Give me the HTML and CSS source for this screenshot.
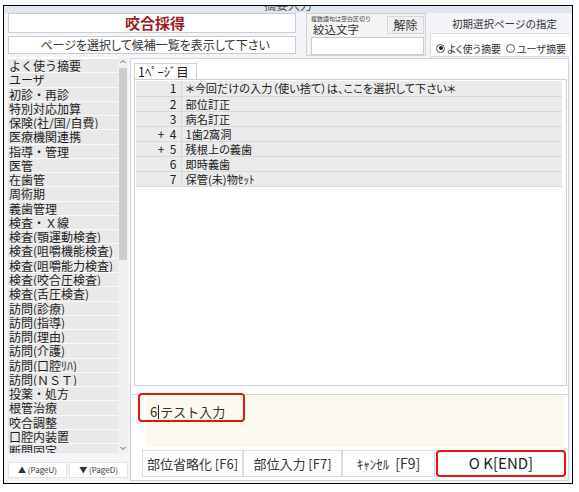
FILE: index.html
```html
<!DOCTYPE html>
<html lang="ja">
<head>
<meta charset="utf-8">
<title>摘要入力</title>
<link rel="stylesheet" href="styles.css">
</head>
<body>
<div class="window">
  <div class="titlebar"><span class="caption">摘要入力</span></div>
  <div class="client">
    <div class="top">
      <div class="heading">
        <div class="title-box">咬合採得</div>
        <div class="hint-box">ページを選択して候補一覧を表示して下さい</div>
      </div>
      <div class="filter">
        <div class="filter-head">
          <div class="filter-labels">
            <div class="tiny">複数語句は空白区切り</div>
            <div class="filter-label">絞込文字</div>
          </div>
          <div class="clear">解除</div>
        </div>
        <div class="filter-input"></div>
      </div>
      <div class="initial">
        <div class="initial-label">初期選択ページの指定</div>
        <div class="radios">
          <span class="radio on"></span><span class="radio-text">よく使う摘要</span>
          <span class="radio"></span><span class="radio-text">ユーザ摘要</span>
        </div>
      </div>
    </div>
    <div class="main">
      <div class="side">
        <div class="list">
          <ul class="items">
            <li>よく使う摘要</li>
            <li>ユーザ</li>
            <li>初診・再診</li>
            <li>特別対応加算</li>
            <li>保険(社/国/自費)</li>
            <li>医療機関連携</li>
            <li>指導・管理</li>
            <li>医管</li>
            <li>在歯管</li>
            <li>周術期</li>
            <li>義歯管理</li>
            <li>検査・Ｘ線</li>
            <li>検査(顎運動検査)</li>
            <li>検査(咀嚼機能検査)</li>
            <li>検査(咀嚼能力検査)</li>
            <li>検査(咬合圧検査)</li>
            <li>検査(舌圧検査)</li>
            <li>訪問(診療)</li>
            <li>訪問(指導)</li>
            <li>訪問(理由)</li>
            <li>訪問(介護)</li>
            <li>訪問(口腔ﾘﾊ)</li>
            <li>訪問(ＮＳＴ)</li>
            <li>投薬・処方</li>
            <li>根管治療</li>
            <li>咬合調整</li>
            <li>口腔内装置</li>
            <li>断間固定</li>
          </ul>
          <div class="vscroll">
            <svg class="arrow" width="10" height="10" viewBox="0 0 10 10"><path d="M2.5 6 L5 3.5 L7.5 6" fill="none" stroke="#606060" stroke-width="1"/></svg>
            <div class="track"><div class="thumb"></div></div>
            <svg class="arrow" width="10" height="10" viewBox="0 0 10 10"><path d="M2.5 4 L5 6.5 L7.5 4" fill="none" stroke="#606060" stroke-width="1"/></svg>
          </div>
        </div>
        <div class="pager">
          <div class="page-btn">▲ (PageU)</div>
          <div class="page-btn">▼ (PageD)</div>
        </div>
      </div>
      <div class="panel">
        <div class="tabs"><div class="tab">1ﾍﾟｰｼﾞ目</div></div>
        <div class="tab-body">
          <table class="rows">
            <tr><td class="num">1</td><td class="txt">＊今回だけの入力（使い捨て）は、ここを選択して下さい＊</td></tr>
            <tr><td class="num">2</td><td class="txt">部位訂正</td></tr>
            <tr><td class="num">3</td><td class="txt">病名訂正</td></tr>
            <tr><td class="num">+&nbsp;&nbsp;4</td><td class="txt">1歯2窩洞</td></tr>
            <tr><td class="num">+&nbsp;&nbsp;5</td><td class="txt">残根上の義歯</td></tr>
            <tr><td class="num">6</td><td class="txt">即時義歯</td></tr>
            <tr><td class="num">7</td><td class="txt">保管(未)物ｾｯﾄ</td></tr>
          </table>
        </div>
        <div class="entry">
          <div class="entry-field"><span class="entry-text">6<span class="caret"></span>テスト入力</span></div>
          <div class="mark entry-mark"></div>
        </div>
        <div class="actions">
          <div class="act b1">部位省略化 [F6]</div>
          <div class="act b2">部位入力 [F7]</div>
          <div class="act b3">ｷｬﾝｾﾙ&nbsp; <span class="fkey">[F9]</span></div>
          <div class="act ok">O K[END]</div>
        </div>
      </div>
    </div>
  </div>
</div>
</body>
</html>
```

FILE: styles.css
```css
* { box-sizing: border-box; }
html, body { margin: 0; padding: 0; background: #ffffff; }
body {
  font-family: "Noto Sans CJK JP", "Noto Sans", sans-serif;
  color: #222;
}
.window {
  margin: 5px 0 0 3px;
  width: 570px;
  height: 479px;
  border: 1px solid #000;
  background: #f3f5f9;
  overflow: hidden;
}
.titlebar {
  height: 7px;
  background: #dfe7f1;
  overflow: hidden;
  text-align: center;
}
.caption {
  display: block;
  font-size: 12px;
  line-height: 12px;
  margin-top: -7px;
  color: #555;
}
.client {
  padding: 0 0 0 4px;
}
.top {
  display: flex;
  height: 44px;
}
.heading {
  width: 288px;
  display: flex;
  flex-direction: column;
  gap: 3px;
}
.title-box {
  height: 20px;
  background: #fff;
  border: 1px solid #c9ccd1;
  color: #a01a1a;
  font-weight: bold;
  font-size: 15px;
  line-height: 18px;
  text-align: center;
  padding-left: 6px;
}
.hint-box {
  height: 18px;
  background: #fff;
  border: 1px solid #c9ccd1;
  font-size: 12px;
  line-height: 16px;
  text-align: center;
  color: #333;
  padding-left: 6px;
  font-feature-settings: "palt";
}
.filter {
  margin-left: 10px;
  width: 120px;
  height: 43px;
  border: 1px solid #cfd2d6;
  background: #f4f4f4;
  padding: 1px 1px 0 4px;
  display: flex;
  flex-direction: column;
}
.filter-head {
  display: flex;
  justify-content: space-between;
  height: 21px;
}
.filter-labels { display: flex; flex-direction: column; }
.tiny {
  font-size: 6px;
  line-height: 8px;
  color: #444;
  white-space: nowrap;
}
.filter-label {
  font-size: 11.5px;
  line-height: 13px;
  color: #333;
  margin-left: 2px;
}
.clear {
  width: 37px;
  height: 18px;
  margin-top: 1px;
  background: #f0f0f0;
  border: 1px solid #d6d6d6;
  font-size: 12px;
  line-height: 16px;
  text-align: center;
  color: #333;
}
.filter-input {
  margin-top: 1px;
  height: 18px;
  background: #fff;
  border: 1px solid #c9ccd1;
}
.initial {
  margin-left: 4px;
  width: 139px;
  display: flex;
  flex-direction: column;
}
.initial-label {
  height: 20px;
  font-size: 10.5px;
  line-height: 22px;
  color: #333;
  text-align: center;
  padding-left: 10px;
}
.radios {
  height: 24px;
  background: #fff;
  border: 1px solid #d8dbe0;
  border-right: none;
  display: flex;
  align-items: center;
  padding: 6px 0 0 5px;
  font-size: 10px;
  color: #333;
  white-space: nowrap;
  font-feature-settings: "palt";
}
.radio {
  width: 9px;
  height: 9px;
  border: 1px solid #555;
  border-radius: 50%;
  background: #fff;
  margin-right: 2px;
  position: relative;
  flex: none;
}
.radio.on::after {
  content: "";
  position: absolute;
  left: 1.5px;
  top: 1.5px;
  width: 4px;
  height: 4px;
  border-radius: 50%;
  background: #222;
}
.radio-text { margin-right: 5px; }

.main {
  display: flex;
  height: 425px;
}
.side {
  width: 120px;
  display: flex;
  flex-direction: column;
}
.list {
  height: 396px;
  background: #fff;
  display: flex;
  overflow: hidden;
}
.items {
  list-style: none;
  margin: 0;
  padding: 2px 0 0 0;
  width: 110px;
}
.items li {
  height: 14.28px;
  line-height: 14px;
  font-size: 12px;
  background: #e9e9e9;
  border-bottom: 1px solid #fafafa;
  padding-left: 1px;
  white-space: nowrap;
  overflow: hidden;
  color: #1e1e1e;
}
.vscroll {
  width: 10px;
  display: flex;
  flex-direction: column;
  background: #f0f0f0;
}
.vscroll .arrow { flex: none; width: 10px; height: 10px; }
.track { flex: 1; padding: 1px 1px; }
.thumb {
  height: 192px;
  background: #cdcdcd;
}
.pager {
  margin-top: 9px;
  display: flex;
  gap: 2px;
  height: 16px;
}
.page-btn {
  flex: 1;
  background: #fff;
  border: 1px solid #e2e2e2;
  font-size: 8px;
  line-height: 14px;
  text-align: center;
  color: #333;
  white-space: nowrap;
}

.panel {
  margin-left: 2px;
  margin-top: 1px;
  width: 439px;
  height: 423px;
  background: #fff;
  border: 1px solid #d2d5da;
  display: flex;
  flex-direction: column;
}
.tabs {
  height: 20px;
  padding: 4px 0 0 3px;
  display: flex;
}
.tab {
  width: 63px;
  height: 16px;
  border: 1px solid #cfcfcf;
  border-bottom: none;
  font-size: 12.5px;
  line-height: 15px;
  padding-left: 3px;
  color: #222;
  white-space: nowrap;
}
.tab-body {
  margin-left: 3px;
  width: 433px;
  height: 307px;
  border: 1px solid #cfcfcf;
  padding: 1px 0 0 1px;
}
.rows {
  border-collapse: collapse;
  width: 426px;
}
.rows td {
  height: 15.1px;
  padding: 0;
  background: #ebebeb;
  border-bottom: 1px solid #d8d8d8;
  font-size: 12px;
  line-height: 14px;
  white-space: nowrap;
  color: #222;
}
.rows td.num {
  width: 45px;
  text-align: right;
  padding-right: 4px;
  border-right: 1px solid #d8d8d8;
}
.rows td.txt {
  padding-left: 4px;
  font-size: 11.2px;
  font-feature-settings: "palt";
}

.entry {
  margin-top: 8px;
  border-top: 1px solid #d6d6d6;
  padding: 1px 4px 0 15px;
  position: relative;
}
.entry-field {
  height: 51px;
  background: #fbf9ee;
  padding: 2px 0 0 4px;
}
.entry-text {
  font-size: 13px;
  line-height: 16px;
  color: #333;
  display: inline-flex;
  align-items: center;
}
.caret {
  display: inline-block;
  width: 1px;
  height: 14px;
  background: #222;
  margin: 0 1px 0 1px;
}
.mark {
  border: 2.5px solid #e41414;
  border-radius: 4px;
}
.entry-mark {
  position: absolute;
  left: 7px;
  top: -2px;
  width: 107px;
  height: 29px;
}
.actions {
  display: flex;
  padding: 3px 0 0 11px;
  height: 31px;
}
.act {
  height: 27px;
  background: #fff;
  border: 1px solid #dcdcdc;
  font-size: 13px;
  line-height: 25px;
  text-align: center;
  color: #333;
  white-space: nowrap;
}
.b1 { width: 101px; }
.b2 { width: 99px; }
.b3 { width: 93px; }
.fkey { font-size: 14px; }
.ok {
  width: 130px;
  margin-left: 1px;
  border: 2.5px solid #e41414;
  border-radius: 4px;
  font-size: 15px;
  line-height: 22px;
  color: #222;
}
```
